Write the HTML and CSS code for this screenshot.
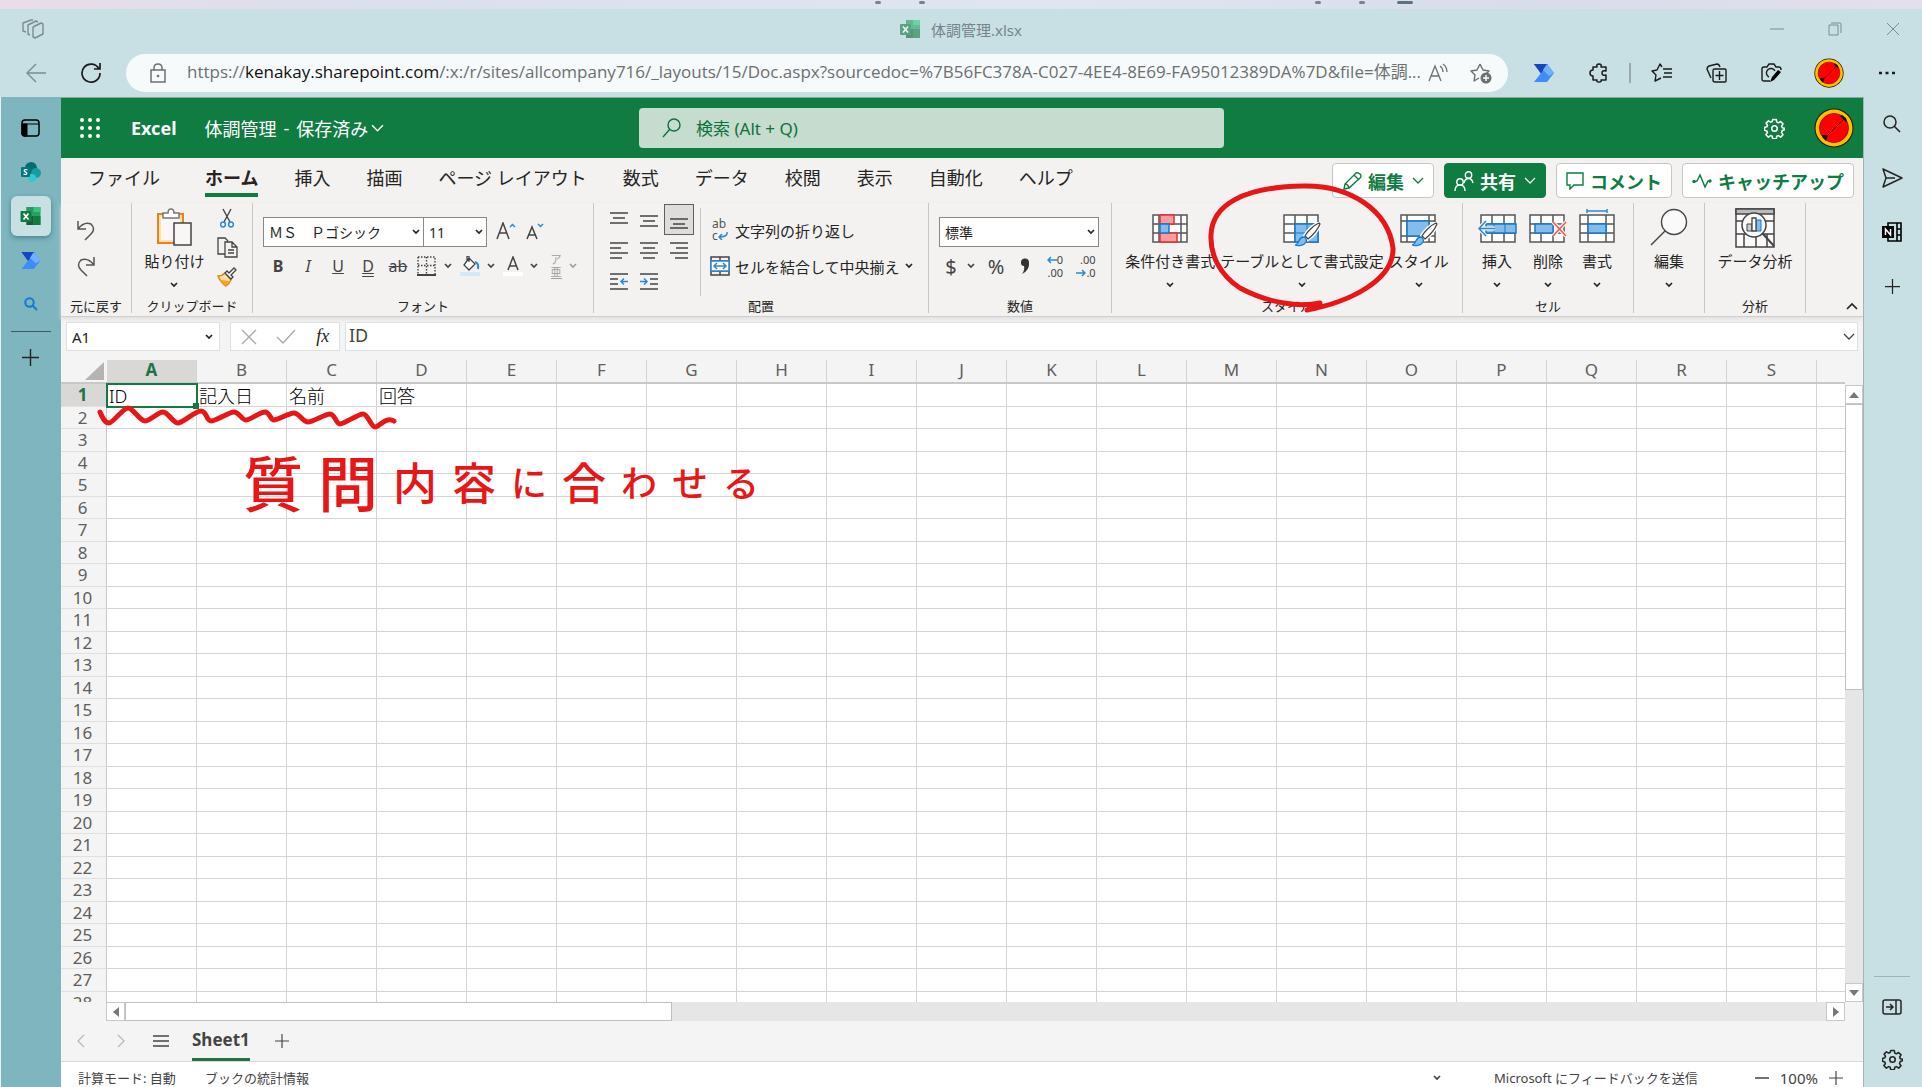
FILE: index.html
```html
<!DOCTYPE html>
<html lang="ja">
<head>
    <meta charset="UTF-8">
    <title>体調管理.xlsx</title>
    <link rel="stylesheet" href="styles.css">
</head>
<body>
<svg class="defs" aria-hidden="true">
    <symbol id="chev" viewBox="0 0 8 6"><path d="M1 1l3 3 3-3" fill="none" stroke="currentColor" stroke-width="1.700"/></symbol>
    <symbol id="chev-thin" viewBox="0 0 12 8"><path d="M1 1l5 5 5-5" fill="none" stroke="currentColor" stroke-width="1.3"/></symbol>
    <symbol id="gear" viewBox="0 0 20 20"><path d="M8.3 1.5h3.4l.5 2.4 1.5.7 2.1-1.3 2.3 2.3-1.3 2.1.6 1.5 2.1.5v1.6l-2.1.7-.7 1.9 1.4 2-2.2 2.3-2.2-1.4-1.5.6-.5 2.3H8.3l-.5-2.3-1.5-.6-2.1 1.4-2.4-2.3 1.4-2.1-.6-1.5-2.1-.6V9l2.1-.6.7-1.6L2 4.9l2.2-2.2 2.1 1.2 1.5-.6z" fill="none" stroke="currentColor" stroke-width="1.5" stroke-linejoin="round"/><circle cx="10" cy="10" r="2.6" fill="none" stroke="currentColor" stroke-width="1.5"/></symbol>
    <symbol id="avatar" viewBox="0 0 40 40"><circle cx="20" cy="20" r="19.5" fill="#1a1a00"/><circle cx="20" cy="20" r="18.500" fill="#ffc000"/><circle cx="20" cy="20" r="14.500" fill="#f00" stroke="#a31500"/><path d="M26 8l6 6 1-1-1-3-4-3zM8 27h6l-2 6-3-3z" fill="#111"/><path d="M11 30L30 11" stroke="#400" stroke-width="1"/></symbol>
    <symbol id="flow" viewBox="0 0 20 18"><path d="M0 0h14l-6 11z" fill="#0f3bb5"/><path d="M13 0l7 9-7 9H0l7-9z" fill="#3f8cf5"/><path d="M0 0h13l-6 9z" fill="#1746c4"/><path d="M13 0l7 9-5 3-6-6z" fill="#6fb1ff"/></symbol>
    <symbol id="excel" viewBox="0 0 20 18"><path d="M6 0h14v18H6z" fill="#21a366"/><path d="M6 0h7v5H6z" fill="#2a9a60"/><path d="M13 0h7v5h-7z" fill="#33c481"/><path d="M6 9h7v9H6z" fill="#185c37"/><path d="M13 9h7v9h-7z" fill="#107c41"/><rect y="4" width="11" height="11" rx="1" fill="#107c41"/><path d="M3 6.500l5 6M8 6.500l-5 6" stroke="#fff" stroke-width="1.700"/></symbol>
    <symbol id="plus" viewBox="0 0 18 18"><path d="M9 0v18M0 9h18" stroke="currentColor" stroke-width="1.5"/></symbol>
    <symbol id="brush" viewBox="0 0 28 26"><path d="M26 1c-5 2-12 9-14 13l3 3c5-4 10-10 12-15z" fill="#fff" stroke="#fff" stroke-width="4"/><path d="M26 1c-5 2-12 9-14 13l3 3c5-4 10-10 12-15z" fill="#fff" stroke="#444" stroke-width="1.3"/><path d="M2 23c4 0 3-7 8-8 3 0 4 3 3 5-2 4-8 4-11 3z" fill="#83bdec" stroke="#1979ca" stroke-width="1.3"/></symbol>
</svg>

<div class="desktop-strip">
    <i></i><i></i><i class="far"></i><i></i><i class="active"></i>
</div>

<header class="browser">
    <div class="title-bar">
        <svg class="workspaces" viewBox="0 0 22 20"><path d="M11 8l8-4 2 1v10l-8 4-2-1zM8 16l-2-1V6l8-4 2 1M4 13l-3-1V4l8-3 2 0" fill="none" stroke="currentColor" stroke-width="1.4" stroke-linejoin="round"/></svg>
        <div class="page-title"><svg width="20" height="18"><use href="#excel"/></svg>体調管理.xlsx</div>
        <div class="window-buttons">
            <button aria-label="最小化"><svg width="14" height="14"><path d="M0 7h14" stroke="currentColor"/></svg></button>
            <button aria-label="元に戻す"><svg width="14" height="14"><path d="M1 3h9v10H1zM3 1h9q1 0 1 1v9" fill="none" stroke="currentColor"/></svg></button>
            <button aria-label="閉じる"><svg width="14" height="14"><path d="M1 1l12 12M13 1L1 13" stroke="currentColor"/></svg></button>
        </div>
    </div>
    <div class="tool-bar">
        <button class="tool back" aria-label="戻る"><svg width="20" height="20"><path d="M20 10H1M10 1L1 10l9 9" fill="none" stroke="currentColor" stroke-width="1.4"/></svg></button>
        <button class="tool" aria-label="更新"><svg width="22" height="22"><path d="M19 7a9 9 0 1 0 1 4M20 1v6h-6" fill="none" stroke="currentColor" stroke-width="1.700"/></svg></button>
        <div class="address">
            <svg class="lock" width="16" height="20"><path d="M1 7h14v12H1zM4 7V5q0-4 4-4t4 4v2" fill="none" stroke="currentColor" stroke-width="1.5"/><circle cx="8" cy="13" r="1.3" fill="currentColor"/></svg>
            <span class="url" role="textbox" aria-label="アドレス">https://<b>kenakay.sharepoint.com</b>/:x:/r/sites/allcompany716/_layouts/15/Doc.aspx?sourcedoc=%7B56FC378A-C027-4EE4-8E69-FA95012389DA%7D&amp;file=体調...</span>
            <button aria-label="音声で読み上げる"><svg width="20" height="20"><path d="M1 18L7 3l6 15M3 13h8M12 3q3 2 3 6M15 1q4 3 4 8" fill="none" stroke="currentColor" stroke-width="1.3"/></svg></button>
            <button class="add-favorite" aria-label="お気に入りに追加"><svg width="22" height="21"><path d="M10 1l3 6 6 1-4 4M9 15l-5 3 1-6-4-4 6-1 3-6" fill="none" stroke="currentColor" stroke-width="1.4" stroke-linejoin="round"/><circle cx="16" cy="15" r="5.500" fill="currentColor"/><path d="M16 12v6M13 15h6" stroke="#fff" stroke-width="1.4"/></svg></button>
        </div>
        <button class="tool" aria-label="Power Automate"><svg width="20" height="18"><use href="#flow"/></svg></button>
        <button class="tool" aria-label="拡張機能"><svg width="20" height="20"><path d="M4 4h4q-1-3 2-3t2 3h5v4q-4-1-4 2t4 2v5h-5q1 2-2 2t-2-2H4v-4q-3 0-3-3t3-3z" fill="none" stroke="currentColor" stroke-width="1.5" stroke-linejoin="round"/></svg></button>
        <span class="divider"></span>
        <button class="tool" aria-label="お気に入り"><svg width="21" height="20"><path d="M12 6h9M13 10h8M12 14h9M11 4L9 1 6 7l-5 1 4 4-1 6 6-3" fill="none" stroke="currentColor" stroke-width="1.4" stroke-linejoin="round"/></svg></button>
        <button class="tool" aria-label="コレクション"><svg width="21" height="20"><path d="M8 6h11q1 0 1 1v11q0 1-1 1H9q-2 0-2-2V8q0-2 1-2zM13.500 8v9M9.500 12.500h8M5 15l-4-9q0-2 2-3l8-2q2 0 3 3" fill="none" stroke="currentColor" stroke-width="1.4"/></svg></button>
        <button class="tool" aria-label="Web キャプチャ"><svg width="21" height="20"><path d="M9 18H3q-2 0-2-2V6q0-2 2-2h3l2-3h5l2 3h3q2 0 2 3M14 8a4.500 4.500 0 1 0-6 6" fill="none" stroke="currentColor" stroke-width="1.4"/><path d="M20 9l-7 8-4 2 2-5 6-7z" fill="#000"/></svg></button>
        <button class="tool profile" aria-label="プロファイル"><svg width="30" height="30"><use href="#avatar"/></svg></button>
        <button class="tool" aria-label="設定など"><svg width="16" height="4"><path d="M0 2h3M6.500 2h3M13 2h3" stroke="currentColor" stroke-width="2.500"/></svg></button>
    </div>
</header>

<div class="main">
    <nav class="tab-rail">
        <button aria-label="タブ"><svg width="19" height="18"><rect x="1" y="1" width="17" height="16" rx="3" fill="none" stroke="#000" stroke-width="1.5"/><path d="M1 5h17M1 5h5v12H3q-2 0-2-2z" stroke="#000"/></svg></button>
        <button aria-label="SharePoint"><svg width="20" height="20"><circle cx="10" cy="6" r="6" fill="#036c70"/><circle cx="15" cy="11" r="5" fill="#1a9ba1"/><circle cx="11" cy="16" r="4" fill="#37c6d0"/><rect y="5" width="9" height="10" rx="1" fill="#03787c"/><path d="M6.500 8q-2-1-3 0t1 2 1 2-3 0" fill="none" stroke="#fff" stroke-width="1.200"/></svg></button>
        <button class="current" aria-label="体調管理.xlsx"><svg width="21" height="18"><use href="#excel"/></svg></button>
        <button aria-label="Power Automate"><svg width="20" height="17"><use href="#flow"/></svg></button>
        <button aria-label="検索"><svg width="14" height="14"><circle cx="5.500" cy="5.500" r="4.200" fill="none" stroke="#1479d0" stroke-width="2"/><path d="M8.500 8.500L13 13" stroke="#1479d0" stroke-width="2"/></svg></button>
        <hr>
        <button class="new" aria-label="新しいタブ"><svg width="17" height="17"><use href="#plus"/></svg></button>
    </nav>

    <div class="excel">
        <div class="app-header">
            <div class="app-left">
                <button aria-label="アプリ起動ツール"><svg width="20" height="20" fill="#fff"><circle cx="2" cy="2" r="2"/><circle cx="10" cy="2" r="2"/><circle cx="18" cy="2" r="2"/><circle cx="2" cy="10" r="2"/><circle cx="10" cy="10" r="2"/><circle cx="18" cy="10" r="2"/><circle cx="2" cy="18" r="2"/><circle cx="10" cy="18" r="2"/><circle cx="18" cy="18" r="2"/></svg></button>
                <strong>Excel</strong>
                <button class="file-name"><span>体調管理</span><span>-</span><span>保存済み</span><svg width="13" height="9"><use href="#chev-thin"/></svg></button>
            </div>
            <label class="search">
                <svg width="20" height="20"><circle cx="12" cy="7" r="6" fill="none" stroke="currentColor" stroke-width="1.4"/><path d="M8 11l-7 8" stroke="currentColor" stroke-width="1.4"/></svg>
                <input type="text" placeholder="検索 (Alt + Q)" aria-label="検索">
            </label>
            <div class="app-right">
                <button aria-label="設定"><svg width="21" height="21"><use href="#gear"/></svg></button>
                <button aria-label="アカウント"><svg width="40" height="40"><use href="#avatar"/></svg></button>
            </div>
        </div>

        <div class="tabs-row">
            <div class="tabs">
                <a class="file" href="#">ファイル</a>
                <a class="selected" href="#">ホーム</a>
                <a href="#">挿入</a>
                <a href="#">描画</a>
                <a href="#">ページ レイアウト</a>
                <a href="#">数式</a>
                <a href="#">データ</a>
                <a href="#">校閲</a>
                <a href="#">表示</a>
                <a href="#">自動化</a>
                <a href="#">ヘルプ</a>
            </div>
            <div class="actions">
                <button><svg width="20" height="20"><path d="M2 18l1-5L14 2q2-1 4 1t0 4L7 17zM12 4l4 4M3 13q3 0 4 4" fill="none" stroke="currentColor" stroke-width="1.4"/></svg>編集<svg class="down" width="12" height="8"><use href="#chev-thin"/></svg></button>
                <button class="share"><svg width="20" height="20"><g fill="none" stroke="currentColor" stroke-width="1.4"><circle cx="6" cy="11" r="3.200"/><path d="M1 20q0-6 5-6t5 6"/><circle cx="14.500" cy="4" r="3.200"/><path d="M10 12q1-4.500 4.500-4.500T19 12"/></g></svg>共有<svg class="down" width="12" height="8"><use href="#chev-thin"/></svg></button>
                <button><svg width="18" height="18"><path d="M1 1h16v12H8l-4 4v-4H1z" fill="none" stroke="currentColor" stroke-width="1.4"/></svg>コメント</button>
                <button><svg width="20" height="16"><path d="M2 9l3-1 3-6 5 12 3-6h3" fill="none" stroke="currentColor" stroke-width="1.5"/><circle cx="2" cy="8.500" r="1.700" fill="currentColor"/><circle cx="18" cy="8" r="1.700" fill="currentColor"/></svg>キャッチアップ</button>
            </div>
        </div>

        <div class="ribbon">
            <section class="group undo">
                <div class="body column">
                    <button aria-label="元に戻す"><svg width="20" height="22"><path d="M2 2v8h8M2 10q6-8 13-5 5 5 0 10l-6 6" fill="none" stroke="#555" stroke-width="1.500"/></svg></button>
                    <button aria-label="やり直し"><svg width="20" height="22"><path d="M18 2v8h-8M18 10Q12 2 5 5q-5 5 0 10l6 6" fill="none" stroke="#555" stroke-width="1.500"/></svg></button>
                </div>
                <h2>元に戻す</h2>
            </section>

            <section class="group clipboard">
                <div class="body">
                    <button class="big paste"><svg width="36" height="38"><path d="M2 6h25v29H2z" fill="#fbe2a8" stroke="#e8821a" stroke-width="2"/><path d="M5 9h19v23H5z" fill="#f8f7f6"/><path d="M7 10V5h5q0-4 3-4t3 4h5v5z" fill="#fff" stroke="#777" stroke-width="1.500"/><path d="M18 15h17v22H18z" fill="#f8f7f6" stroke="#444" stroke-width="1.500"/></svg>貼り付け<svg class="down" width="8" height="6"><use href="#chev"/></svg></button>
                    <div class="side">
                        <button aria-label="切り取り"><svg width="14" height="20"><path d="M3 1l7 13M11 1L4 14" stroke="#444" stroke-width="1.400"/><circle cx="3" cy="16.500" r="2.400" fill="none" stroke="#2b88d8" stroke-width="1.500"/><circle cx="11" cy="16.500" r="2.400" fill="none" stroke="#2b88d8" stroke-width="1.500"/></svg></button>
                        <button aria-label="コピー"><svg width="21" height="21"><path d="M8 17H1V1h7l3 3M8 5h7l5 5v10H8zM15 5v5h5M11 13h6M11 16h6" fill="none" stroke="#444" stroke-width="1.300"/></svg></button>
                        <button aria-label="書式のコピー"><svg width="20" height="20"><path d="M1 9q4 0 7-3l6 7q-2 4-5 6-5-3-8-10z" fill="#fbe2a8" stroke="#e8821a" stroke-width="1.500"/><path d="M3 13l10 1-4 5z" fill="#f5a623"/><path d="M8 6l6 6 2-2-2-2 5-5-2-2-5 5-2-2z" fill="#fff" stroke="#444" stroke-width="1.300"/></svg></button>
                    </div>
                </div>
                <h2>クリップボード</h2>
            </section>

            <section class="group font">
                <div class="body rows">
                    <div class="line">
                        <span class="select name"><select aria-label="フォント"><option>ＭＳ　Ｐゴシック</option></select><svg width="8" height="6"><use href="#chev"/></svg></span>
                        <span class="select size"><select aria-label="サイズ"><option>11</option></select><svg width="8" height="6"><use href="#chev"/></svg></span>
                        <button class="grow" aria-label="フォント サイズの拡大"><svg width="20" height="20"><path d="M1 17L7 1l6 16M3 11h8" fill="none" stroke="#444" stroke-width="1.500"/><path d="M14 5l2.500-2.500L19 5" fill="none" stroke="#2b88d8" stroke-width="1.500"/></svg></button>
                        <button class="grow" aria-label="フォント サイズの縮小"><svg width="20" height="20"><path d="M2 17L7 5l5 12M4 13h6" fill="none" stroke="#444" stroke-width="1.500"/><path d="M13 2l2.500 2.500L18 2" fill="none" stroke="#2b88d8" stroke-width="1.500"/></svg></button>
                    </div>
                    <div class="line format">
                        <button class="bold">B</button>
                        <button class="italic">I</button>
                        <button class="under">U</button>
                        <button class="double">D</button>
                        <button class="strike">ab</button>
                        <button class="split" aria-label="罫線"><svg width="20" height="20"><path d="M1 1h17v17M1 1v17M9.500 1v17M1 9.500h17" fill="none" stroke="#444" stroke-width="1.400" stroke-dasharray="1.500 1.500"/><path d="M0 19h19" stroke="#444" stroke-width="2"/></svg><svg width="8" height="6"><use href="#chev"/></svg></button>
                        <button class="split" aria-label="塗りつぶし"><svg width="20" height="20"><path d="M0 16h20v4H0z" fill="#d6e8f7"/><path d="M9 2l6 6-6 6-5-5zM9 6V0H7v4" fill="#fff" stroke="#444" stroke-width="1.300"/><path d="M15 6q4 1 3 7" fill="none" stroke="#2b88d8" stroke-width="2"/></svg><svg width="8" height="6"><use href="#chev"/></svg></button>
                        <button class="split" aria-label="フォントの色"><svg width="20" height="20"><path d="M0 16h20v4H0z" fill="#fff"/><path d="M5 14L10 1l5 13M7 10h7" fill="none" stroke="#444" stroke-width="1.500"/></svg><svg width="8" height="6"><use href="#chev"/></svg></button>
                        <button class="split ruby"><span>ア<br>亜</span><svg width="8" height="6"><use href="#chev"/></svg></button>
                    </div>
                </div>
                <h2>フォント</h2>
            </section>

            <section class="group align">
                <div class="body">
                    <div class="align-grid">
                        <button aria-label="上揃え"><svg width="18" height="18"><path d="M0 2h18M3 7h12M0 12h18" stroke="#444" stroke-width="1.300"/></svg></button>
                        <button aria-label="上下中央揃え"><svg width="18" height="18"><path d="M0 5h18M3 10h12M0 15h18" stroke="#444" stroke-width="1.300"/></svg></button>
                        <button class="on" aria-label="下揃え"><svg width="18" height="18"><path d="M0 8h18M3 13h12M0 17h18" stroke="#444" stroke-width="1.300"/></svg></button>
                        <button aria-label="左揃え"><svg width="18" height="18"><path d="M0 1h18M0 6h11M0 11h18M0 16h12" stroke="#444" stroke-width="1.300"/></svg></button>
                        <button aria-label="中央揃え"><svg width="18" height="18"><path d="M0 1h18M3 6h12M0 11h18M3 16h12" stroke="#444" stroke-width="1.300"/></svg></button>
                        <button aria-label="右揃え"><svg width="18" height="18"><path d="M0 1h18M6 6h12M0 11h18M5 16h13" stroke="#444" stroke-width="1.300"/></svg></button>
                        <button aria-label="インデントを減らす"><svg width="18" height="18"><path d="M0 1h18M0 6h8M0 11h8M0 16h18" stroke="#444" stroke-width="1.300"/><path d="M18 8.500h-7M14 5.500l-3 3 3 3" fill="none" stroke="#2b88d8" stroke-width="1.500"/></svg></button>
                        <button aria-label="インデントを増やす"><svg width="18" height="18"><path d="M0 1h18M10 6h8M10 11h8M0 16h18" stroke="#444" stroke-width="1.300"/><path d="M0 8.500h7M4 5.500l3 3-3 3" fill="none" stroke="#2b88d8" stroke-width="1.500"/></svg></button>
                    </div>
                    <div class="wrap">
                        <button><span class="wrap-icon"><span>ab</span><span>c<svg width="10" height="8"><path d="M9 0q1 5-8 5M4 2L1 5l3 3" fill="none" stroke="#2b88d8" stroke-width="1.500"/></svg></span></span>文字列の折り返し</button>
                        <button><svg width="20" height="20"><path d="M1 1h18v18H1zM1 5h18M1 15h18M10 1v4M10 15v4" fill="none" stroke="#444" stroke-width="1.500"/><path d="M1 5h18v10H1z" fill="#fff" stroke="#2b88d8" stroke-width="1.500"/><path d="M4 10h12M7 7l-3 3 3 3M13 7l3 3-3 3" fill="none" stroke="#2b88d8" stroke-width="1.500"/></svg>セルを結合して中央揃え<svg width="8" height="6"><use href="#chev"/></svg></button>
                    </div>
                </div>
                <h2>配置</h2>
            </section>

            <section class="group number">
                <div class="body rows">
                    <div class="line">
                        <span class="select format-name"><select aria-label="表示形式"><option>標準</option></select><svg width="8" height="6"><use href="#chev"/></svg></span>
                    </div>
                    <div class="line figures">
                        <button class="dollar">$<svg width="8" height="6"><use href="#chev"/></svg></button>
                        <button>%</button>
                        <button aria-label="桁区切り"><svg width="12" height="18"><path d="M2 6a4 4 0 0 1 8-1q1 8-7 12 3-4 2-8-3 0-3-3z" fill="#333"/></svg></button>
                        <button class="decimal" aria-label="小数点以下の表示桁数を増やす"><span><svg width="10" height="8"><path d="M10 4H1M4 1L1 4l3 3" fill="none" stroke="#2b88d8" stroke-width="1.500"/></svg>0</span><span>.00</span></button>
                        <button class="decimal" aria-label="小数点以下の表示桁数を減らす"><span>.00</span><span><svg width="10" height="8"><path d="M0 4h9M6 1l3 3-3 3" fill="none" stroke="#2b88d8" stroke-width="1.500"/></svg>.0</span></button>
                    </div>
                </div>
                <h2>数値</h2>
            </section>

            <section class="group styles">
                <div class="body">
                    <button class="big"><svg width="36" height="38"><path d="M1 7h34v27H1zM1 16h34M1 25h34M7 7v27M29 7v27" fill="#fff" stroke="#555" stroke-width="1.500"/><path d="M8 7h14v9H8zM8 25h17v9H8z" fill="#ff9a9e" stroke="#d33" stroke-width="1.500"/><path d="M8 16h9v9H8z" fill="#83bdec" stroke="#1979ca" stroke-width="1.500"/></svg>条件付き書式<svg class="down" width="8" height="6"><use href="#chev"/></svg></button>
                    <div class="marked">
                        <button class="big"><svg width="40" height="38"><path d="M2 7h34v27H2zM2 16h34M2 25h34M13 7v27M25 7v27" fill="#fff" stroke="#555" stroke-width="1.500"/><path d="M13 16h23v18H13z" fill="#83bdec" stroke="#1979ca" stroke-width="1.500"/><path d="M13 25h23M25 16v18" stroke="#1979ca"/><use href="#brush" x="11" y="14" width="28" height="26"/></svg>テーブルとして書式設定<svg class="down" width="8" height="6"><use href="#chev"/></svg></button>
                        <svg class="circle" viewBox="1206 182 192 132"><path d="M1320 303C1300 307 1270 304 1240 288 1220 275 1210 255 1211 235 1212 205 1243 187 1303 186 1350 185 1388 210 1393 248 1394 280 1350 302 1307 310"/></svg>
                    </div>
                    <button class="big"><svg width="40" height="38"><path d="M2 7h34v27H2zM2 13h34M2 28h34M8 7v27M30 7v27" fill="#fff" stroke="#555" stroke-width="1.500"/><path d="M8 13h22v15H8z" fill="#83bdec" stroke="#1979ca" stroke-width="1.500"/><use href="#brush" x="11" y="14" width="28" height="26"/></svg>スタイル<svg class="down" width="8" height="6"><use href="#chev"/></svg></button>
                </div>
                <h2>スタイル</h2>
            </section>

            <section class="group cells">
                <div class="body">
                    <button class="big"><svg width="40" height="38"><path d="M4 7h34v27H4zM15 7v27M27 7v27M4 16h34M4 25h34" fill="#fff" stroke="#555" stroke-width="1.500"/><path d="M9 16h30v9H9z" fill="#83bdec" stroke="#1979ca" stroke-width="1.500"/><path d="M17 16v9M28 16v9" stroke="#1979ca"/><path d="M18 20.500H2M9 13l-7 7.500 7 7.500" fill="none" stroke="#f3f2f1" stroke-width="4"/><path d="M18 20.500H2M9 13l-7 7.500 7 7.500" fill="none" stroke="#2b88d8" stroke-width="1.500"/></svg>挿入<svg class="down" width="8" height="6"><use href="#chev"/></svg></button>
                    <button class="big"><svg width="38" height="38"><path d="M1 7h34v27H1zM12 7v27M24 7v27M1 16h34M1 25h34" fill="#fff" stroke="#555" stroke-width="1.500"/><path d="M6 16h18v9H6z" fill="#83bdec" stroke="#1979ca" stroke-width="1.500"/><path d="M24 14l13 14M37 14L24 28" stroke="#f3f2f1" stroke-width="4"/><path d="M24 14l13 14M37 14L24 28" stroke="#e55" stroke-width="1.500"/></svg>削除<svg class="down" width="8" height="6"><use href="#chev"/></svg></button>
                    <button class="big"><svg width="36" height="38"><path d="M1 7h34v27H1zM9 7v27M27 7v27M1 16h34M1 25h34" fill="#fff" stroke="#555" stroke-width="1.500"/><path d="M9 16h18v9H9z" fill="#83bdec" stroke="#1979ca" stroke-width="1.500"/><path d="M8 3h20M8 1v4M28 1v4" stroke="#2b88d8" stroke-width="1.500"/></svg>書式<svg class="down" width="8" height="6"><use href="#chev"/></svg></button>
                </div>
                <h2>セル</h2>
            </section>

            <section class="group edit">
                <div class="body">
                    <button class="big"><svg width="38" height="38"><circle cx="24" cy="14" r="12.500" fill="#fafafa" stroke="#444" stroke-width="1.400"/><path d="M15 23L1 37" stroke="#444" stroke-width="1.400"/></svg>編集<svg class="down" width="8" height="6"><use href="#chev"/></svg></button>
                </div>
            </section>

            <section class="group analyze">
                <div class="body">
                    <button class="big"><svg width="40" height="40"><path d="M1 1h38v38H1zM1 13h38M1 26h38M9 26v13M21 26v13M32 26v13" fill="#fafafa" stroke="#444" stroke-width="1.500"/><path d="M1 1h38v5H1z" fill="#bbb" stroke="#444" stroke-width="1.500"/><circle cx="19" cy="17" r="12" fill="#fafafa" stroke="#444" stroke-width="1.500"/><path d="M28 26l11 12" stroke="#444" stroke-width="2"/><path d="M12 16h5v7h-5z" fill="#ccc" stroke="#444"/><path d="M21 12h5v11h-5z" fill="#83bdec" stroke="#1979ca"/><path d="M17 10h4v13h-4z" fill="#fff" stroke="#444" stroke-width="1.300"/></svg>データ分析</button>
                </div>
                <h2>分析</h2>
            </section>
            <button class="collapse" aria-label="リボンを折りたたむ"><svg width="12" height="8"><path d="M1 7l5-5 5 5" fill="none" stroke="#222" stroke-width="1.600"/></svg></button>
        </div>

        <div class="formula-bar">
            <span class="name-box"><input type="text" value="A1" aria-label="名前ボックス"><svg width="8" height="6"><use href="#chev"/></svg></span>
            <span class="fx-buttons">
                <button aria-label="キャンセル"><svg width="16" height="16"><path d="M1 1l14 14M15 1L1 15" stroke="#aaa" stroke-width="1.400"/></svg></button>
                <button aria-label="入力"><svg width="20" height="16"><path d="M1 8l6 6L19 1" fill="none" stroke="#aaa" stroke-width="1.400"/></svg></button>
                <button class="fx">fx</button>
            </span>
            <span class="formula"><input type="text" value="ID" aria-label="数式バー"><svg width="12" height="8"><use href="#chev-thin"/></svg></span>
        </div>

        <div class="sheet">
            <div class="grid-area">
                <table id="grid">
                    <thead><tr id="columns"><th class="corner"><svg width="19" height="18"><path d="M19 0v18H0z" fill="#b5b4b3"/></svg></th></tr></thead>
                    <tbody id="rows"></tbody>
                </table>
                <svg class="wave" viewBox="96 404 302 28"><path d="M100 412C103 419 105 423 109 423S123 408 128 408 140 421 145 421 158 412 163 412 173 423 178 423 195 411 201 411 206 421 211 421 229 412 234 412 242 420 246 420 260 412 265 412 270 420 274 420 289 413 294 413 303 422 308 422 325 414 330 414 336 424 340 424 358 414 363 414 371 427 375 427 386 416 394 421"/></svg>
                <div class="note"><span class="l">質</span><span class="l">問</span><span>内</span><span>容</span><span class="s">に</span><span>合</span><span class="s">わ</span><span class="s">せ</span><span class="s">る</span></div>
            </div>
            <div class="v-scroll">
                <button aria-label="上へ"><svg width="10" height="6"><path d="M5 0l5 6H0z" fill="#777"/></svg></button>
                <div class="thumb"></div>
                <button aria-label="下へ"><svg width="10" height="6"><path d="M0 0h10L5 6z" fill="#777"/></svg></button>
            </div>
            <div class="h-scroll">
                <button aria-label="左へ"><svg width="6" height="10"><path d="M6 0v10L0 5z" fill="#777"/></svg></button>
                <div class="thumb"></div>
                <button aria-label="右へ"><svg width="6" height="10"><path d="M0 0l6 5-6 5z" fill="#777"/></svg></button>
            </div>
        </div>

        <div class="sheet-tabs">
            <button class="dim" aria-label="前へ"><svg width="8" height="14"><path d="M7 1L1 7l6 6" fill="none" stroke="currentColor" stroke-width="1.300"/></svg></button>
            <button class="dim" aria-label="次へ"><svg width="8" height="14"><path d="M1 1l6 6-6 6" fill="none" stroke="currentColor" stroke-width="1.300"/></svg></button>
            <button aria-label="すべてのシート"><svg width="16" height="12"><path d="M0 1h16M0 6h16M0 11h16" stroke="currentColor" stroke-width="1.600"/></svg></button>
            <a class="sheet-name" href="#">Sheet1</a>
            <button aria-label="新しいシート"><svg width="14" height="14"><use href="#plus"/></svg></button>
        </div>

        <footer class="status">
            <span>計算モード: 自動</span>
            <span>ブックの統計情報</span>
            <svg class="more" width="8" height="6"><use href="#chev"/></svg>
            <a href="#">Microsoft にフィードバックを送信</a>
            <span class="zoom">
                <button aria-label="縮小"><svg width="14" height="14"><path d="M0 7h14" stroke="currentColor" stroke-width="1.500"/></svg></button>
                100%
                <button aria-label="拡大"><svg width="14" height="14"><use href="#plus"/></svg></button>
            </span>
        </footer>
    </div>

    <aside class="side-rail">
        <button aria-label="検索"><svg width="18" height="18"><circle cx="7" cy="7" r="6" fill="none" stroke="currentColor" stroke-width="1.500"/><path d="M11 11l6 6" stroke="currentColor" stroke-width="1.600"/></svg></button>
        <button aria-label="送信"><svg width="21" height="20"><path d="M1 1l19 9-19 9 3-9zM4 10h9" fill="none" stroke="currentColor" stroke-width="1.500" stroke-linejoin="round"/></svg></button>
        <button aria-label="OneNote"><svg width="20" height="20"><path d="M6 1h13v18H6zM15 1v18M15 7h4M15 13h4" fill="none" stroke="#000" stroke-width="1.600"/><path d="M0 4h12v12H0z"/><path d="M3.500 13V7l5 6V7" fill="none" stroke="#fff" stroke-width="1.500"/></svg></button>
        <button aria-label="追加"><svg width="15" height="15"><use href="#plus"/></svg></button>
        <hr>
        <button class="low" aria-label="サイドバーを非表示"><svg width="20" height="16"><rect x="1" y="1" width="18" height="14" rx="2" fill="none" stroke="currentColor" stroke-width="1.500"/><path d="M14 1v14M4 8h6M8 5l3 3-3 3" fill="none" stroke="currentColor" stroke-width="1.500"/></svg></button>
        <button class="low" aria-label="設定"><svg width="21" height="21"><use href="#gear"/></svg></button>
    </aside>
</div>

<script>
    // last column only peeks in, so it has no letter
    const headings = [...'ABCDEFGHIJKLMNOPQRS', ''];
    const firstRow = ['ID', '記入日', '名前', '回答'];
    const rowCount = 28;

    const columns = document.getElementById('columns');
    const rows = document.getElementById('rows');

    headings.forEach((letter, i) => {
        const th = document.createElement('th');
        th.innerHTML = `<span>${letter}</span>`;
        if (i === 0) th.classList.add('picked');
        columns.appendChild(th);
    });

    for (let r = 1; r <= rowCount; r++) {
        const tr = document.createElement('tr');
        const th = document.createElement('th');
        th.textContent = r;
        if (r === 1) th.classList.add('picked');
        tr.appendChild(th);
        headings.forEach((letter, i) => {
            const td = document.createElement('td');
            if (r === 1 && firstRow[i]) td.textContent = firstRow[i];
            if (r === 1 && i === 0) td.classList.add('active');
            tr.appendChild(td);
        });
        rows.appendChild(tr);
    }
</script>
</body>
</html>
```
FILE: styles.css
```css
* {
    box-sizing: border-box;
}

body {
    margin: 0;
    height: 100vh;
    display: flex;
    flex-direction: column;
    overflow: hidden;
    font-family: "Noto Sans", "Noto Sans CJK JP", sans-serif;
    font-size: 15px;
    color: #252423;
    background-color: #c8e0e3;
}

button, input, select {
    font: inherit;
    color: inherit;
    border: none;
    background: none;
    padding: 0;
    margin: 0;
}

button {
    display: flex;
    align-items: center;
    justify-content: center;
    white-space: nowrap;
}

a {
    color: inherit;
    text-decoration: none;
}

svg {
    display: block;
    flex-shrink: 0;
}

.defs {
    position: absolute;
    width: 0;
    height: 0;
}

/* desktop peeking out above the window */
.desktop-strip {
    flex: 0 0 9px;
    display: flex;
    gap: 38px;
    padding: 1px 0 0 875px;
    background: linear-gradient(90deg, #e9dde8, #dbdfee 20%, #dfe6f1 55%, #d8dceb 80%, #e4dfec);
}

.desktop-strip i {
    width: 6px;
    height: 3px;
    border-radius: 2px;
    background-color: #7c828c;
}

.desktop-strip .far {
    margin-left: 352px;
}

.desktop-strip .active {
    width: 16px;
    margin-left: -6px;
    background-color: #5d7180;
}

/* browser */
.title-bar {
    height: 40px;
    display: grid;
    grid-template-columns: 1fr auto 1fr;
    align-items: center;
    color: #7c8b8e;
}

.workspaces {
    width: 22px;
    height: 20px;
    margin-left: 22px;
}

.page-title {
    display: flex;
    align-items: center;
    gap: 11px;
    color: #76858a;
}

.page-title svg {
    opacity: 0.6;
}

.window-buttons {
    display: flex;
    justify-content: flex-end;
}

.window-buttons button {
    width: 58px;
    height: 36px;
}

.tool-bar {
    height: 48px;
    display: flex;
    align-items: center;
    padding: 0 8px;
    color: #1b1b1b;
}

.tool {
    flex: 0 0 55px;
    height: 36px;
}

.tool.profile {
    flex-basis: 60px;
}

.tool.back {
    color: #7c8b8e;
}

.address {
    flex: 1;
    min-width: 0;
    height: 38px;
    margin: 0 8px;
    padding: 0 16px 0 24px;
    display: flex;
    align-items: center;
    gap: 4px;
    border-radius: 19px;
    background-color: #f6fafb;
    color: #6d6f70;
}

.lock {
    margin-right: 17px;
}

.add-favorite {
    margin-left: 18px;
}

.url {
    flex: 1;
    overflow: hidden;
    white-space: nowrap;
    font-family: "Open Sans", "Noto Sans CJK JP", sans-serif;
    font-size: 17px;
    line-height: 26px;
    padding-bottom: 2px;
}

.url b {
    font-weight: 400;
    color: #111;
}

.divider {
    width: 2px;
    height: 20px;
    margin: 0 3px;
    background-color: #98a8ab;
}

.main {
    flex: 1;
    min-height: 0;
    display: flex;
}

.tab-rail {
    flex: 0 0 61px;
    display: flex;
    flex-direction: column;
    align-items: center;
    padding: 11px 1px 0 0;
    background-color: #7eb5bf;
    border-left: 1px solid #e8f2f4;
}

.tab-rail button {
    width: 40px;
    height: 40px;
    margin-bottom: 4px;
}

.tab-rail .current {
    border-radius: 6px;
    background-color: #c8e0e3;
    box-shadow: 0 2px 5px #4b8490;
}

.tab-rail hr, .side-rail hr {
    width: 40px;
    margin: 3px 0 5px;
    border: none;
    border-top: 1px solid #3c5a60;
}

.side-rail {
    flex: 0 0 59px;
    display: flex;
    flex-direction: column;
    align-items: center;
    border-left: 1px solid #a2b4b8;
    padding: 0 2px 2px 0;
}

.side-rail button {
    height: 54px;
    width: 40px;
}

.side-rail .low {
    height: 52px;
}

.side-rail hr {
    width: 36px;
    margin: auto 0 4px;
    border-color: #a2b4b8;
}

/* excel */
.excel {
    flex: 1;
    min-width: 0;
    display: flex;
    flex-direction: column;
    background-color: #f4f4f4;
    border-top: 1px solid #8aa79a;
}

.app-header {
    flex: 0 0 60px;
    display: flex;
    align-items: center;
    background-color: #107c41;
    color: #fff;
}

.app-left {
    flex: 0 0 578px;
    display: flex;
    align-items: center;
    padding-left: 19px;
    font-size: 18px;
}

.app-left strong {
    margin: 0 28px 0 31px;
}

.file-name {
    gap: 7px;
}

.file-name svg {
    margin-left: -4px;
}

.search {
    flex: 0 1 585px;
    height: 40px;
    display: flex;
    align-items: center;
    gap: 14px;
    padding: 0 23px;
    border-radius: 4px;
    background-color: #c6dccf;
    color: #0f703b;
    font-size: 17px;
}

.search input {
    flex: 1;
}

.search input::placeholder {
    color: #0f703b;
    opacity: 1;
}

.app-right {
    margin-left: auto;
    padding-right: 9px;
    display: flex;
    gap: 29px;
}

.tabs-row {
    flex: 0 0 45px;
    display: flex;
    justify-content: space-between;
    background-color: #f3f2f1;
}

.tabs {
    display: flex;
    gap: 36px;
    padding-left: 27px;
    font-size: 18px;
    line-height: 40px;
    white-space: nowrap;
}

.tabs a {
    height: 39px;
}

.tabs .file {
    margin-right: 9px;
}

.tabs .selected {
    font-weight: 700;
    border-bottom: 4px solid #107c41;
}

.actions {
    display: flex;
    gap: 10px;
    padding: 5px 9px 0 0;
}

.actions button {
    height: 35px;
    padding: 0 9px;
    gap: 6px;
    border: 1px solid #c8c6c4;
    border-radius: 4px;
    background-color: #fff;
    color: #107c41;
    font-size: 18px;
    font-weight: 700;
}

.actions .down {
    margin-left: 2px;
}

.actions .share {
    border-color: #107c41;
    background-color: #107c41;
    color: #fff;
}

.ribbon {
    flex: 0 0 114px;
    display: flex;
    background-color: #f3f2f1;
    border-bottom: 1px solid #d0cfce;
    box-shadow: 0 2px 4px #ddd;
}

.group {
    position: relative;
    height: 110px;
    flex-shrink: 0;
    display: flex;
    flex-direction: column;
    border-right: 1px solid #c8c6c4;
}

.group h2 {
    margin: 0;
    text-align: center;
    font-size: 13px;
    font-weight: 400;
    line-height: 14px;
}

.body {
    height: 96px;
    display: flex;
    justify-content: center;
}

.undo { width: 71px; }
.clipboard { width: 121px; }
.font { width: 341px; }
.align { width: 335px; }
.number { width: 183px; }
.styles { width: 351px; }
.cells { width: 171px; }
.edit { width: 71px; }
.analyze { width: 101px; }

.column {
    flex-direction: column;
    align-items: center;
    gap: 14px;
    padding: 0 20px 6px 0;
}

.big {
    flex-direction: column;
    justify-content: flex-start;
    height: 90px;
    padding-top: 5px;
    line-height: 22px;
}

.big svg:first-child {
    height: 40px;
    margin-bottom: 2px;
}

.big .down {
    margin-top: 10px;
}

.clipboard .body {
    gap: 12px;
    padding-right: 2px;
}

.side {
    display: flex;
    flex-direction: column;
    align-items: center;
    gap: 9px;
    padding-top: 5px;
}

.rows {
    flex-direction: column;
    justify-content: flex-start;
    padding: 13px 0 0 10px;
}

.line {
    height: 32px;
    display: flex;
    align-items: center;
}

.select {
    position: relative;
    display: flex;
    align-items: center;
    height: 30px;
    border: 1px solid #8a8886;
    background-color: #fff;
    font-size: 14px;
}

.select select {
    width: 100%;
    height: 28px;
    padding-left: 5px;
    appearance: none;
}

.select svg {
    position: absolute;
    right: 3px;
    pointer-events: none;
}

.select.name { width: 161px; }
.select.size { width: 64px; margin-left: -1px; }
.select.format-name { width: 160px; }

.grow {
    margin-left: 9px;
}

.format {
    height: 36px;
    font-size: 16px;
    color: #444;
}

.format button {
    width: 30px;
}

.format .split {
    width: 43px;
    gap: 7px;
}

.bold { font-weight: 700; }
.italic { font-style: italic; }
.under { text-decoration: underline; }
.double { text-decoration: underline double; }
.strike { text-decoration: line-through; }

.format .ruby {
    font-size: 11px;
    line-height: 12px;
    color: #a19f9d;
}

.ruby span {
    border-bottom: 1px solid #a19f9d;
}

.align-grid {
    width: 106px;
    display: grid;
    grid-template-columns: repeat(3, 30px);
    grid-template-rows: repeat(3, 31px);
    justify-content: end;
    padding: 1px 6px 0 0;
}

.align-grid .on {
    border: 1px solid #605e5c;
    background-color: #dedddc;
}

.wrap {
    flex: 1;
    height: 88px;
    margin-top: 5px;
    padding: 4px 0 0 9px;
    border-left: 1px solid #c8c6c4;
}

.wrap button {
    height: 36px;
    gap: 5px;
}

.wrap-icon {
    display: grid;
    grid-auto-rows: 12px;
    width: 20px;
    padding-left: 2px;
    font-size: 12px;
    line-height: 12px;
    text-align: left;
    color: #555;
}

.wrap-icon svg, .decimal svg {
    display: inline-block;
}

.figures {
    height: 36px;
    font-size: 20px;
    color: #444;
    gap: 9px;
}

.figures button {
    width: 20px;
}

.figures .dollar {
    width: 38px;
    gap: 10px;
    padding-left: 4px;
}

.figures .decimal {
    display: grid;
    grid-auto-rows: 13px;
    width: 22px;
    font-size: 11px;
    line-height: 12px;
    text-align: right;
}

.styles .body {
    gap: 5px;
}

.marked {
    position: relative;
}

.circle {
    position: absolute;
    z-index: 2;
    left: -14px;
    top: -21px;
    width: 192px;
    height: 132px;
}

.circle path, .wave path {
    fill: none;
    stroke: #e81717;
    stroke-width: 5;
    stroke-linecap: round;
    stroke-linejoin: round;
}

.cells .body {
    gap: 12px;
    padding-right: 4px;
}

.collapse {
    margin: auto 5px 6px auto;
}

.formula-bar {
    flex: 0 0 34px;
    display: flex;
    padding: 5px 5px 0;
}

.formula-bar > span {
    height: 29px;
    display: flex;
    align-items: center;
    border: 1px solid #e1dfdd;
    background-color: #fff;
}

.name-box {
    width: 154px;
    padding: 0 6px 0 5px;
    margin-right: 10px;
}

.name-box input, .formula input {
    flex: 1;
    min-width: 0;
}

.fx-buttons {
    width: 110px;
    justify-content: space-around;
    margin-right: 5px;
}

.fx {
    font-family: "Liberation Serif", serif;
    font-style: italic;
    font-size: 18px;
}

.formula {
    flex: 1;
    padding: 0 2px 0 3px;
    font-size: 18px;
    color: #444;
}

.formula input {
    height: 27px;
    padding-bottom: 4px;
}

.sheet {
    flex: 1;
    min-height: 0;
    display: grid;
    grid-template-columns: 1fr 18px;
    grid-template-rows: 1fr 19px;
}

.grid-area {
    position: relative;
    overflow: hidden;
}

#grid {
    width: 1846px;
    table-layout: fixed;
    border-collapse: separate;
    border-spacing: 0;
}

#grid th {
    padding: 0;
    font-weight: 400;
    font-size: 17px;
    line-height: 20px;
    color: #605e5c;
}

#grid thead th {
    height: 33px;
    padding-top: 9px;
    border-bottom: 2px solid #c8c8c8;
}

#grid thead span {
    display: block;
    height: 22px;
    border-right: 1px solid #d4d4d4;
}

#grid .corner {
    width: 46px;
}

.corner svg {
    margin-left: 24px;
}

#grid tbody th {
    padding-right: 2px;
    border-right: 1px solid #c8c8c8;
    border-bottom: 1px solid #e0e0e0;
}

#grid td {
    padding: 1px 2px 0;
    border-right: 1px solid #d4d4d4;
    border-bottom: 1px solid #d4d4d4;
    background-color: #fff;
    color: #000;
    font-size: 18px;
    font-weight: 300;
    line-height: 20px;
    white-space: nowrap;
}

#grid tbody tr {
    height: 22px;
}

#grid tbody tr:nth-child(odd) {
    height: 23px;
}

#grid .picked {
    font-weight: 700;
    color: #217346;
}

#grid thead .picked span, #grid tbody .picked {
    background-color: #d9d8d7;
}

#grid .active {
    position: relative;
    outline: 2px solid #107c41;
    outline-offset: -1px;
}

#grid .active::after {
    content: "";
    position: absolute;
    right: -3px;
    bottom: -3px;
    width: 6px;
    height: 6px;
    background-color: #107c41;
}

.wave {
    position: absolute;
    left: 35px;
    top: 53px;
    width: 302px;
    height: 28px;
}

.note {
    position: absolute;
    left: 182px;
    top: 82px;
    height: 96px;
    display: flex;
    align-items: center;
    gap: 15px;
    font-size: 44px;
    font-weight: 500;
    color: #e81717;
}

.note .l { font-size: 60px; }
.note .s { font-size: 36px; }

.v-scroll, .h-scroll {
    display: flex;
    background-color: #e6e6e6;
}

.v-scroll {
    flex-direction: column;
    margin-top: 34px;
}

.h-scroll {
    margin-left: 45px;
}

.v-scroll button, .h-scroll button {
    flex: 0 0 19px;
    border: 1px solid #c8c8c8;
    background-color: #fff;
}

.v-scroll button:last-child {
    margin-top: auto;
}

.h-scroll button:last-child {
    margin-left: auto;
}

.thumb {
    border: 1px solid #c0c0c0;
    background-color: #fff;
}

.v-scroll .thumb {
    height: 286px;
}

.h-scroll .thumb {
    width: 547px;
}

.sheet-tabs {
    flex: 0 0 40px;
    display: flex;
    align-items: center;
    color: #444;
}

.sheet-tabs button {
    width: 40px;
    height: 40px;
}

.sheet-tabs .dim {
    color: #b8b8b8;
}

.sheet-name {
    height: 40px;
    margin: 0 12px 0 11px;
    line-height: 38px;
    font-size: 17px;
    font-weight: 700;
    border-bottom: 3px solid #217346;
}

.status {
    flex: 0 0 26px;
    display: flex;
    align-items: center;
    gap: 29px;
    padding: 7px 20px 0 17px;
    border-top: 1px solid #d8d8d8;
    background-color: #fff;
    font-size: 13px;
    line-height: 16px;
    white-space: nowrap;
    color: #444;
}

.status .more {
    margin-left: auto;
    margin-right: 24px;
}

.zoom {
    display: flex;
    align-items: center;
    gap: 11px;
    margin-left: 28px;
    font-size: 15px;
}
```
